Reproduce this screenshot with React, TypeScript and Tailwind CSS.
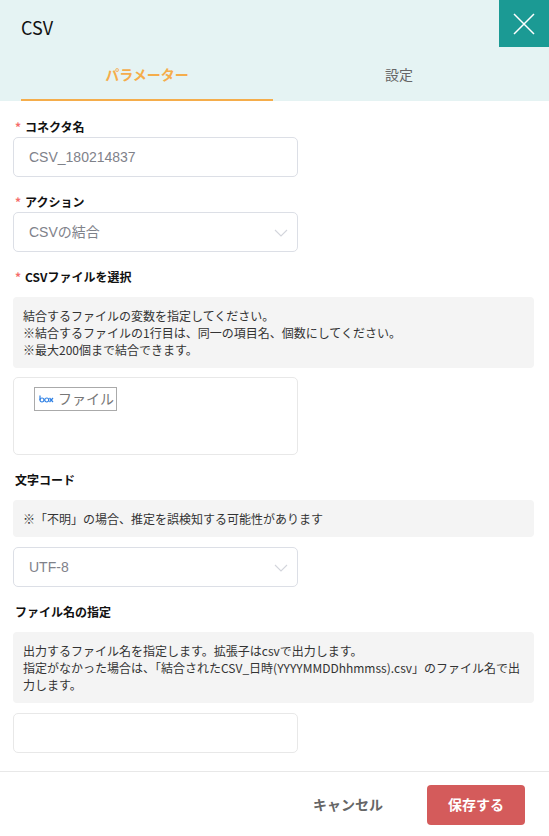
import React from "react";

const sans = "font-['Noto_Sans_CJK_JP',sans-serif]";
const field = "font-['Liberation_Sans','Noto_Sans_CJK_JP',sans-serif]";

function Label({ text, required, className = "" }: { text: string; required?: boolean; className?: string }) {
  return (
    <div className={`flex h-[18px] items-center text-[12px] leading-[18px] font-bold text-[#111] ${className}`}>
      {required && <span className="ml-[2px] mr-[4px] text-[12px] font-bold text-[#f56c6c]">*</span>}
      {!required && <span className="ml-[2px]" />}
      <span>{text}</span>
    </div>
  );
}

function Chevron() {
  return (
    <svg width="14" height="8" viewBox="0 0 14 8" fill="none" className="absolute right-[9px] top-[16px]">
      <path d="M1 1l6 6 6-6" stroke="#d3d5dc" strokeWidth="1.1" />
    </svg>
  );
}

function Box({ children }: { children: React.ReactNode }) {
  return (
    <div className={`relative flex h-10 w-[285px] items-center rounded-[5px] border border-[#dcdfe6] bg-white pl-[15px] text-[14px] text-[#7f828a] ${field}`}>
      {children}
    </div>
  );
}

function Note({ lines, className = "" }: { lines: string[]; className?: string }) {
  return (
    <div className={`w-[521px] rounded-[4px] bg-[#f4f4f4] px-[10px] py-[10px] text-[12px] leading-[17px] text-[#333] ${className}`}>
      {lines.map((l) => (
        <div key={l}>{l}</div>
      ))}
    </div>
  );
}

export default function App() {
  return (
    <div className={`flex h-[836px] w-[549px] flex-col overflow-hidden bg-white ${sans}`}>
      <header className="relative h-[101px] shrink-0 bg-[#e5f3f3]">
        <div className="flex h-[54px] items-center pl-[21px] text-[18px] text-[#111]">CSV</div>
        <button className="absolute right-0 top-0 flex h-[47px] w-[50px] items-center justify-center bg-[#1b9a94]">
          <svg width="24" height="24" viewBox="0 0 24 24" fill="none">
            <path d="M2 2l20 20M22 2L2 22" stroke="#fff" strokeWidth="1.5" />
          </svg>
        </button>
        <div className="ml-[21px] flex h-[47px] w-[504px]">
          <div className="flex flex-1 items-center justify-center border-b-2 border-[#f5ad4b] pb-[4px] text-[14px] font-bold text-[#f5ad4b]">パラメーター</div>
          <div className="flex flex-1 items-center justify-center pb-[6px] text-[14px] text-[#666]">設定</div>
        </div>
      </header>

      <main className="min-h-0 flex-1 pl-[13px] pt-[17px]">
        <Label text="コネクタ名" required />
        <div className="mt-[1px]">
          <Box>CSV_180214837</Box>
        </div>
        <Label text="アクション" required className="mt-[16px]" />
        <div className="mt-[1px]">
          <Box>
            CSVの結合
            <Chevron />
          </Box>
        </div>
        <Label text="CSVファイルを選択" required className="mt-[16px]" />
        <Note
          className="mt-[11px]"
          lines={[
            "結合するファイルの変数を指定してください。",
            "※結合するファイルの1行目は、同一の項目名、個数にしてください。",
            "※最大200個まで結合できます。",
          ]}
        />
        <div className="mt-[9px] h-[78px] w-[285px] rounded-[5px] border border-[#e8e8e8] bg-white pl-[20px] pt-[9px]">
          <div className={`flex h-[24px] w-[83px] items-center whitespace-nowrap border border-[#aaa] pl-[4px] text-[14px] text-[#777] ${field}`}>
            <svg width="15" height="8" viewBox="0 0 30 16" fill="none" className="mr-[4px] shrink-0" stroke="#2f80e4" strokeWidth="2.4">
              <path d="M2 1v9" />
              <circle cx="6" cy="10" r="4" />
              <circle cx="15.5" cy="10" r="4" />
              <path d="M21 6l7 8M28 6l-7 8" />
            </svg>
            ファイル
          </div>
        </div>
        <Label text="文字コード" className="mt-[16px]" />
        <Note className="mt-[11px]" lines={["※「不明」の場合、推定を誤検知する可能性があります"]} />
        <div className="mt-[10px]">
          <Box>
            UTF-8
            <Chevron />
          </Box>
        </div>
        <Label text="ファイル名の指定" className="mt-[16px]" />
        <Note
          className="mt-[11px]"
          lines={[
            "出力するファイル名を指定します。拡張子はcsvで出力します。",
            "指定がなかった場合は、「結合されたCSV_日時(YYYYMMDDhhmmss).csv」のファイル名で出力します。",
          ]}
        />
        <div className="mt-[10px] h-10 w-[285px] rounded-[5px] border border-[#e8e8e8] bg-white" />
      </main>

      <footer className="flex h-[65px] shrink-0 items-center justify-end border-t border-[#e8e8e8] pr-[24px]">
        <button className="mr-[44px] text-[14px] font-bold text-[#666]">キャンセル</button>
        <button className="mt-[1px] h-10 w-[98px] rounded-[4px] bg-[#d45b5b] text-[14px] font-bold text-white">保存する</button>
      </footer>
    </div>
  );
}
